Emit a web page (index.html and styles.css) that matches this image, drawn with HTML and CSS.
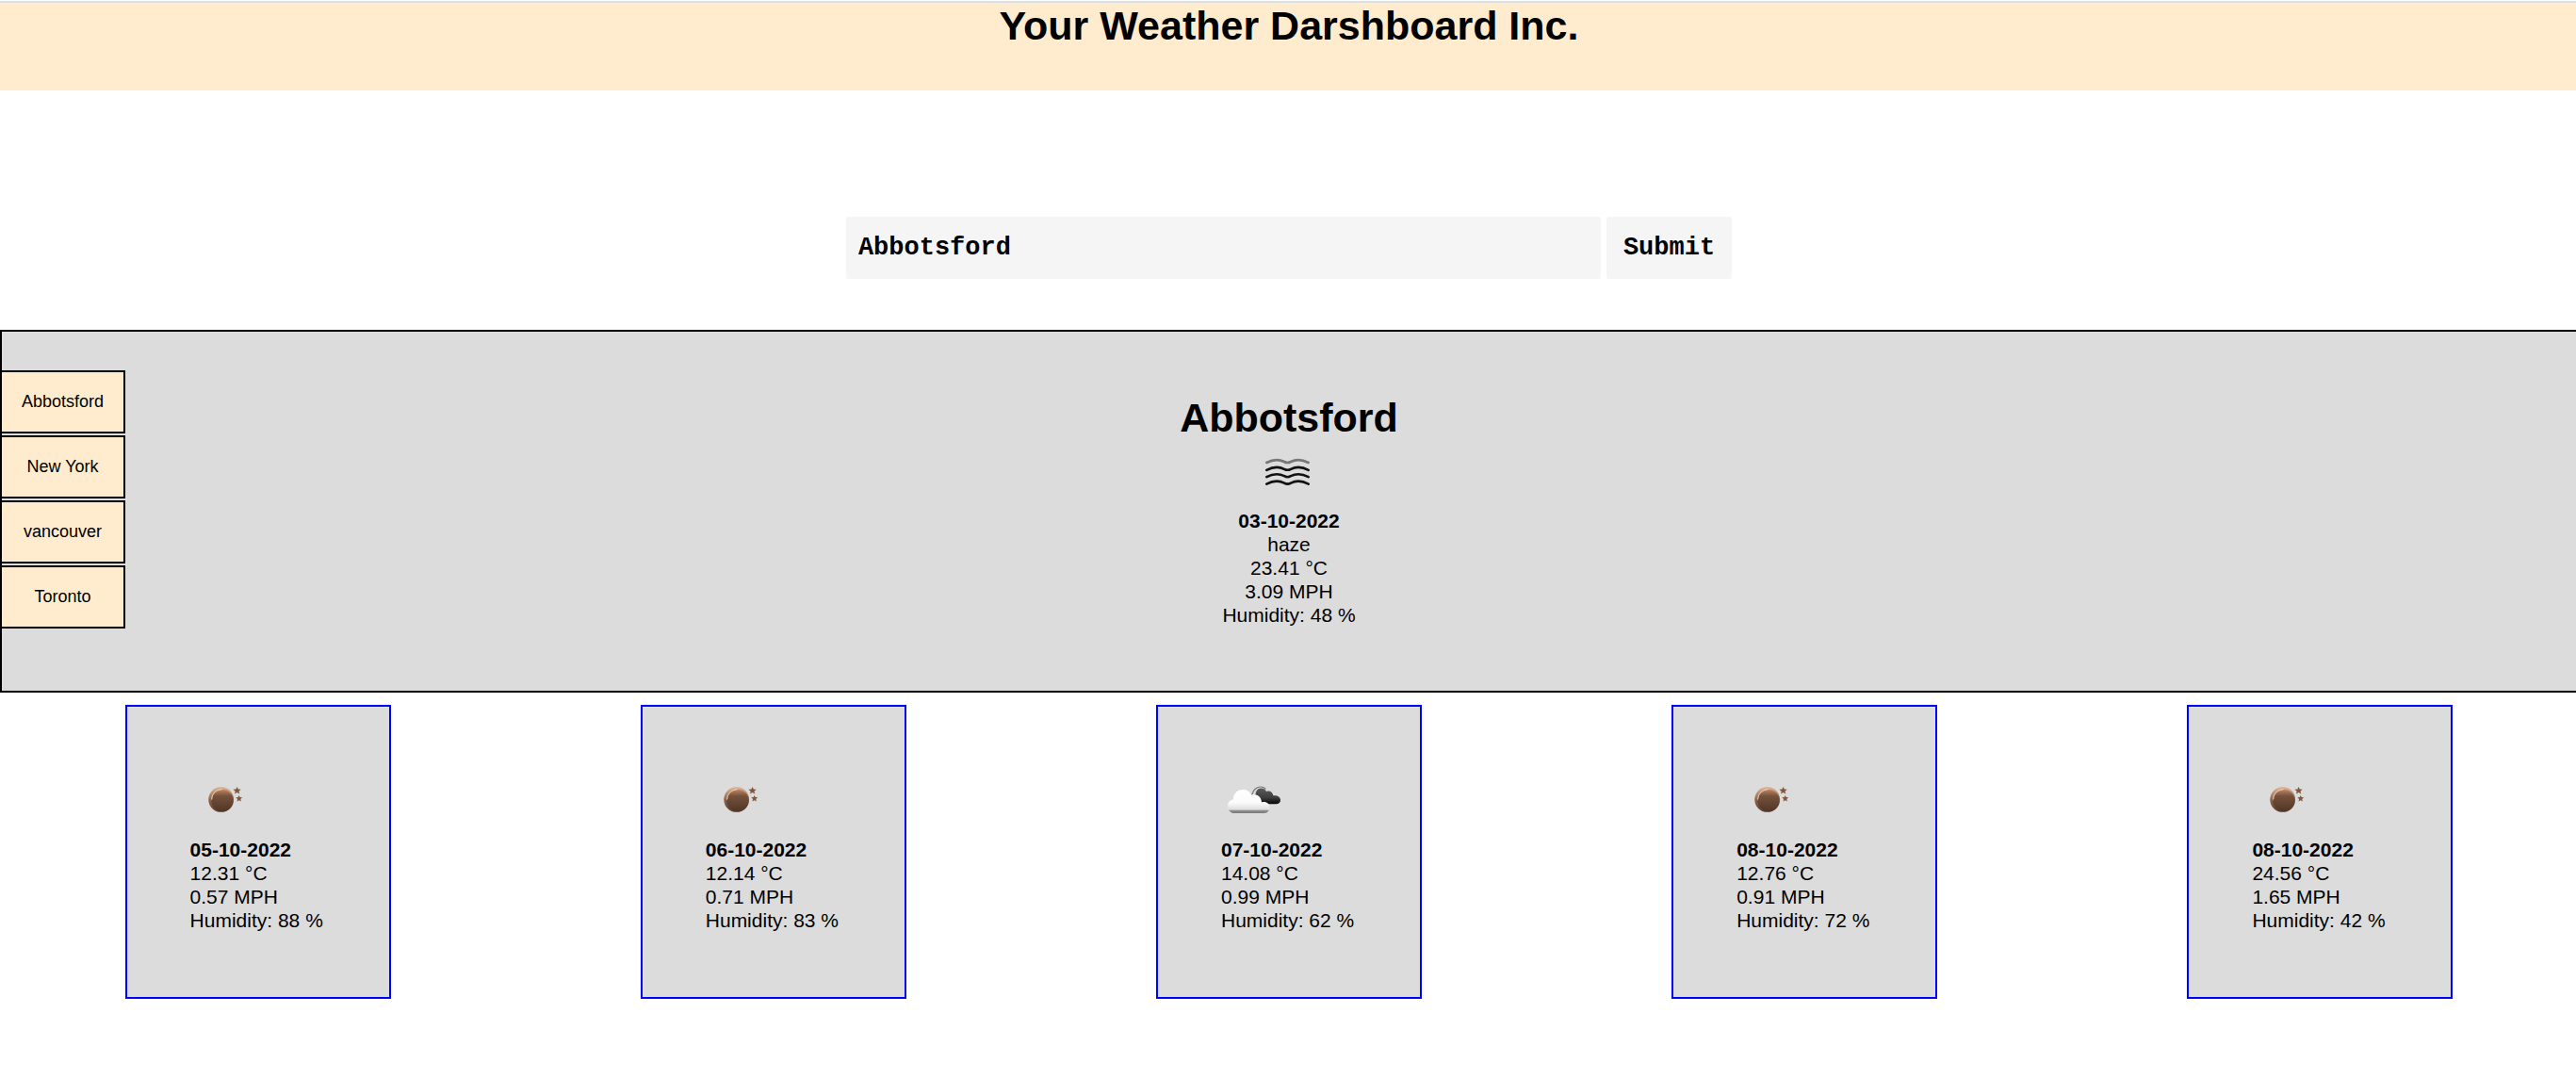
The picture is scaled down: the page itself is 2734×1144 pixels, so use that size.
FILE: index.html
```html
<!DOCTYPE html>
<html lang="en">
<head>
<meta charset="utf-8">
<meta name="viewport" content="width=device-width, initial-scale=1">
<title>Your Weather Darshboard Inc.</title>
<link rel="stylesheet" href="styles.css">
</head>
<body>
<svg class="defs" aria-hidden="true">
  <defs>
    <linearGradient id="moonBody" x1="0" y1="0" x2="0" y2="1">
      <stop offset="0" stop-color="#b98562"/>
      <stop offset=".3" stop-color="#74503a"/>
      <stop offset="1" stop-color="#503626"/>
    </linearGradient>
    <linearGradient id="moonRim" x1="0" y1="0" x2="0" y2="1">
      <stop offset="0" stop-color="#e3b897"/>
      <stop offset=".5" stop-color="#8f6448"/>
      <stop offset="1" stop-color="#5a3d2b"/>
    </linearGradient>
    <linearGradient id="cloudFront" x1="0" y1="0" x2="0" y2="1">
      <stop offset="0" stop-color="#ffffff"/>
      <stop offset=".55" stop-color="#fbfbfb"/>
      <stop offset=".84" stop-color="#dedede"/>
      <stop offset=".9" stop-color="#8c8c8c"/>
      <stop offset="1" stop-color="#7a7a7a"/>
    </linearGradient>
    <linearGradient id="cloudBack" x1="0" y1="0" x2="0" y2="1">
      <stop offset="0" stop-color="#5c5c5c"/>
      <stop offset=".6" stop-color="#3c3c3c"/>
      <stop offset="1" stop-color="#050505"/>
    </linearGradient>
    <symbol id="moon" viewBox="0 0 67 67">
      <circle cx="32.7" cy="31.4" r="13.4" fill="url(#moonRim)"/>
      <circle cx="34" cy="32.6" r="11.6" fill="url(#moonBody)"/>
      <path d="M22.600 31C23 25.500 27 21.500 33 20.700" fill="none" stroke="#f0d3bd" stroke-width="1.300" stroke-linecap="round" opacity=".8"/>
      <path d="M49.600 18l1.200 2.600 2.900.2-2.200 1.900.8 2.900-2.700-1.500-2.600 1.500.7-2.900-2.300-1.900 3-.2z" fill="#80583f"/>
      <path d="M51.700 27l1 2.100 2.500.2-1.900 1.700.6 2.500-2.200-1.300-2.200 1.300.6-2.500-1.900-1.700 2.500-.2z" fill="#80583f"/>
    </symbol>
    <symbol id="clouds" viewBox="0 0 67 67">
      <path d="M37 30c-1.500-6 1-10.500 5.500-10.500 3 0 4.500 1.500 5.500 3.500 4-1.500 7 1 7.300 4.300 4-.6 7.700 1.400 7.700 4.700 0 3-2.500 4.300-5 4.300H44z" fill="url(#cloudBack)"/>
      <path d="M31.500 27.500c2.500-1 1.500-4.500 4.500-7 3-3 8-3.500 11-.5" fill="none" stroke="#777" stroke-width="1.200" stroke-linecap="round"/>
      <path d="M12.500 46C9 45 7 41.500 7 38c0-3.500 2.500-6 6-6.800C12.500 26 17 21 23 21c4 0 7.500 2 9 5.500 6-1.500 11 2 11 8 4.500-1.500 8.500 1.500 8.500 5 0 3.500-2 6.500-6 6.500z" fill="url(#cloudFront)"/>
    </symbol>
    <symbol id="haze" viewBox="0 0 67 67">
      <g fill="none" stroke="#111" stroke-width="2.600" stroke-linecap="round" stroke-linejoin="round">
        <path d="M10.300 23C17 19.500 24 19.500 29 22q3.500 2 7 0C41 19.500 48 19.500 54.700 23" opacity=".5"/>
        <path d="M10.300 30.800C17 27.300 24 27.300 29 29.800q3.500 2 7 0C41 27.300 48 27.300 54.700 30.800"/>
        <path d="M10.300 38.200C17 34.700 24 34.700 29 37.200q3.500 2 7 0C41 34.700 48 34.700 54.700 38.200"/>
        <path d="M10.300 45.600C17 42.100 24 42.100 29 44.600q3.500 2 7 0C41 42.100 48 42.100 54.700 45.600"/>
      </g>
    </symbol>
  </defs>
</svg>

<header class="banner">
  <h1 class="title">Your Weather Darshboard Inc.</h1>
</header>

<main class="content">
  <form class="search">
    <input class="search-input" type="text" aria-label="City" value="Abbotsford" spellcheck="false">
    <button class="search-button" type="button">Submit</button>
  </form>

  <section class="current">
    <nav class="history" aria-label="Recent cities">
      <button class="history-button" type="button">Abbotsford</button>
      <button class="history-button" type="button">New York</button>
      <button class="history-button" type="button">vancouver</button>
      <button class="history-button" type="button">Toronto</button>
    </nav>
    <div class="today">
      <h2 class="title">Abbotsford</h2>
      <svg class="icon" role="img" aria-label="haze"><use href="#haze"/></svg>
      <p class="date">03-10-2022</p>
      <p>haze</p>
      <p>23.41 °C</p>
      <p>3.09 MPH</p>
      <p>Humidity: 48 %</p>
    </div>
  </section>

  <section class="forecast" aria-label="Five day forecast">
    <article class="card">
      <svg class="icon" role="img" aria-label="clear night"><use href="#moon"/></svg>
      <p class="date">05-10-2022</p>
      <p>12.31 °C</p>
      <p>0.57 MPH</p>
      <p>Humidity: 88 %</p>
    </article>
    <article class="card">
      <svg class="icon" role="img" aria-label="clear night"><use href="#moon"/></svg>
      <p class="date">06-10-2022</p>
      <p>12.14 °C</p>
      <p>0.71 MPH</p>
      <p>Humidity: 83 %</p>
    </article>
    <article class="card">
      <svg class="icon" role="img" aria-label="broken clouds"><use href="#clouds"/></svg>
      <p class="date">07-10-2022</p>
      <p>14.08 °C</p>
      <p>0.99 MPH</p>
      <p>Humidity: 62 %</p>
    </article>
    <article class="card">
      <svg class="icon" role="img" aria-label="clear night"><use href="#moon"/></svg>
      <p class="date">08-10-2022</p>
      <p>12.76 °C</p>
      <p>0.91 MPH</p>
      <p>Humidity: 72 %</p>
    </article>
    <article class="card">
      <svg class="icon" role="img" aria-label="clear night"><use href="#moon"/></svg>
      <p class="date">08-10-2022</p>
      <p>24.56 °C</p>
      <p>1.65 MPH</p>
      <p>Humidity: 42 %</p>
    </article>
  </section>
</main>
</body>
</html>
```

FILE: styles.css
```css
* {
  box-sizing: border-box;
  margin: 0;
  padding: 0;
}

body {
  overflow-x: hidden;
  background: #fff;
  color: #000;
  font-family: "Liberation Sans", Arial, sans-serif;
  font-size: 21px;
  line-height: 25px;
}

.defs {
  position: absolute;
  width: 0;
  height: 0;
}

.banner {
  margin-top: 1px;
  padding: 0 0 44px 2px;
  border-top: 2px solid #dadfe0;
  background: blanchedalmond;
  text-align: center;
}

.title {
  font-size: 43px;
  font-weight: bold;
  line-height: 49px;
}

/* The panel's right border runs off the edge of the window. */
.content {
  margin-right: -2px;
}

.search {
  display: flex;
  justify-content: center;
  gap: 6px;
  padding: 134px 0 54px;
}

.search-input,
.search-button {
  height: 66px;
  border: 0;
  border-radius: 3px;
  background: #f5f5f5;
  color: #000;
  font-family: "Courier New", "Liberation Mono", monospace;
  font-size: 27px;
  font-weight: bold;
}

.search-input {
  width: 801px;
  max-width: 70%;
  padding: 0 13px;
}

.search-button {
  padding: 0 18px;
}

.current {
  display: grid;
  grid-template-columns: 1fr auto 1fr;
  border: 2px solid #000;
  background: gainsboro;
}

.history {
  display: flex;
  flex-direction: column;
  align-items: flex-start;
  gap: 2px;
  padding-top: 41px;
}

.history-button {
  width: 131px;
  height: 67px;
  border: 2px solid #000;
  border-left: 0;
  background: blanchedalmond;
  color: #000;
  font-family: inherit;
  font-size: 18px;
}

.today {
  padding: 67px 0 68px;
  text-align: center;
}

.icon {
  display: inline-block;
  width: 67px;
  height: 67px;
  margin-bottom: 5px;
  vertical-align: top;
}

.date {
  font-weight: bold;
}

.forecast {
  display: grid;
  grid-template-columns: repeat(5, 1fr);
  justify-items: center;
  padding-top: 13px;
}

.card {
  width: 282px;
  padding: 67px 67px 69px;
  border: 2px solid #00f;
  background: gainsboro;
  white-space: nowrap;
}
```
